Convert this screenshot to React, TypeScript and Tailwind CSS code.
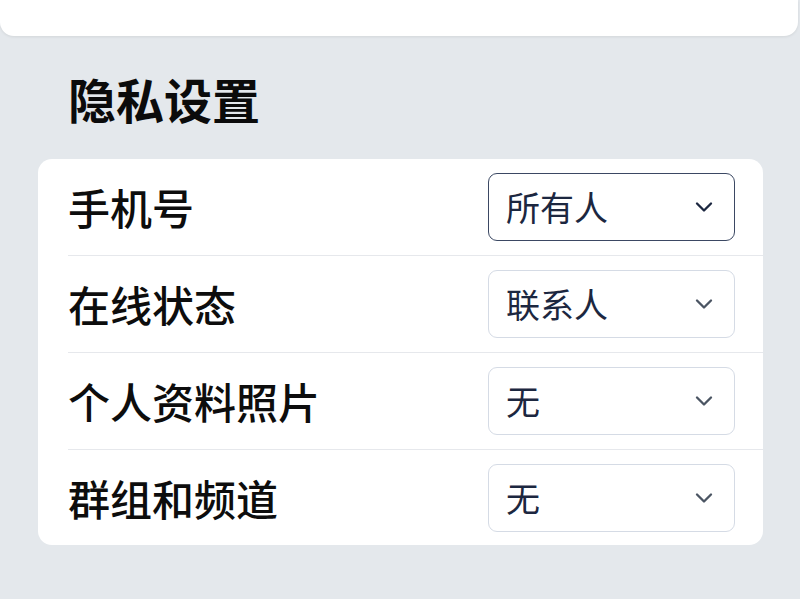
import { ChevronDown } from 'lucide-react';

interface PrivacyRow {
  label: string;
  value: string;
  focused?: boolean;
}

const ROWS: PrivacyRow[] = [
  { label: '手机号', value: '所有人', focused: true },
  { label: '在线状态', value: '联系人' },
  { label: '个人资料照片', value: '无' },
  { label: '群组和频道', value: '无' },
];

function SelectBox({ value, focused }: { value: string; focused?: boolean }) {
  return (
    <div
      className={
        focused
          ? 'flex h-[68px] w-[247px] items-center justify-between rounded-[9px] border-[1.5px] border-[#3b4863] bg-white pl-[17px] pr-[16px]'
          : 'flex h-[68px] w-[247px] items-center justify-between rounded-[9px] border-[1.5px] border-[#d5dbe5] bg-white pl-[17px] pr-[16px]'
      }
    >
      <span className="text-[34px] leading-none text-[#1c2740]">{value}</span>
      <ChevronDown
        size={28}
        strokeWidth={2}
        className={focused ? 'text-[#1c2740]' : 'text-[#4b5563]'}
      />
    </div>
  );
}

export default function App() {
  return (
    <div
      className="min-h-[599px] w-full bg-[#e4e8ec]"
      style={{ fontFamily: '"Noto Sans CJK SC", "Noto Sans", sans-serif' }}
    >
      <div className="h-[36px] w-[798px] rounded-b-[14px] bg-white shadow-[0_1px_3px_rgba(0,0,0,0.08)]" />

      <h1 className="pl-[68px] pt-[38px] text-[48px] font-bold leading-[48px] text-[#0b0b0b]">隐私设置</h1>

      <div className="mx-[38px] mt-[37px] w-[725px] rounded-[14px] bg-white pl-[30px]">
        {ROWS.map((row, i) => (
          <div
            key={row.label}
            className={
              i < ROWS.length - 1
                ? 'flex h-[97px] items-center justify-between border-b border-[#e6e8ec] pr-[28px]'
                : 'flex h-[95px] items-center justify-between pr-[28px]'
            }
          >
            <span className="text-[42px] font-medium leading-none text-[#0d0d0d]">{row.label}</span>
            <SelectBox value={row.value} focused={row.focused} />
          </div>
        ))}
      </div>
    </div>
  );
}
